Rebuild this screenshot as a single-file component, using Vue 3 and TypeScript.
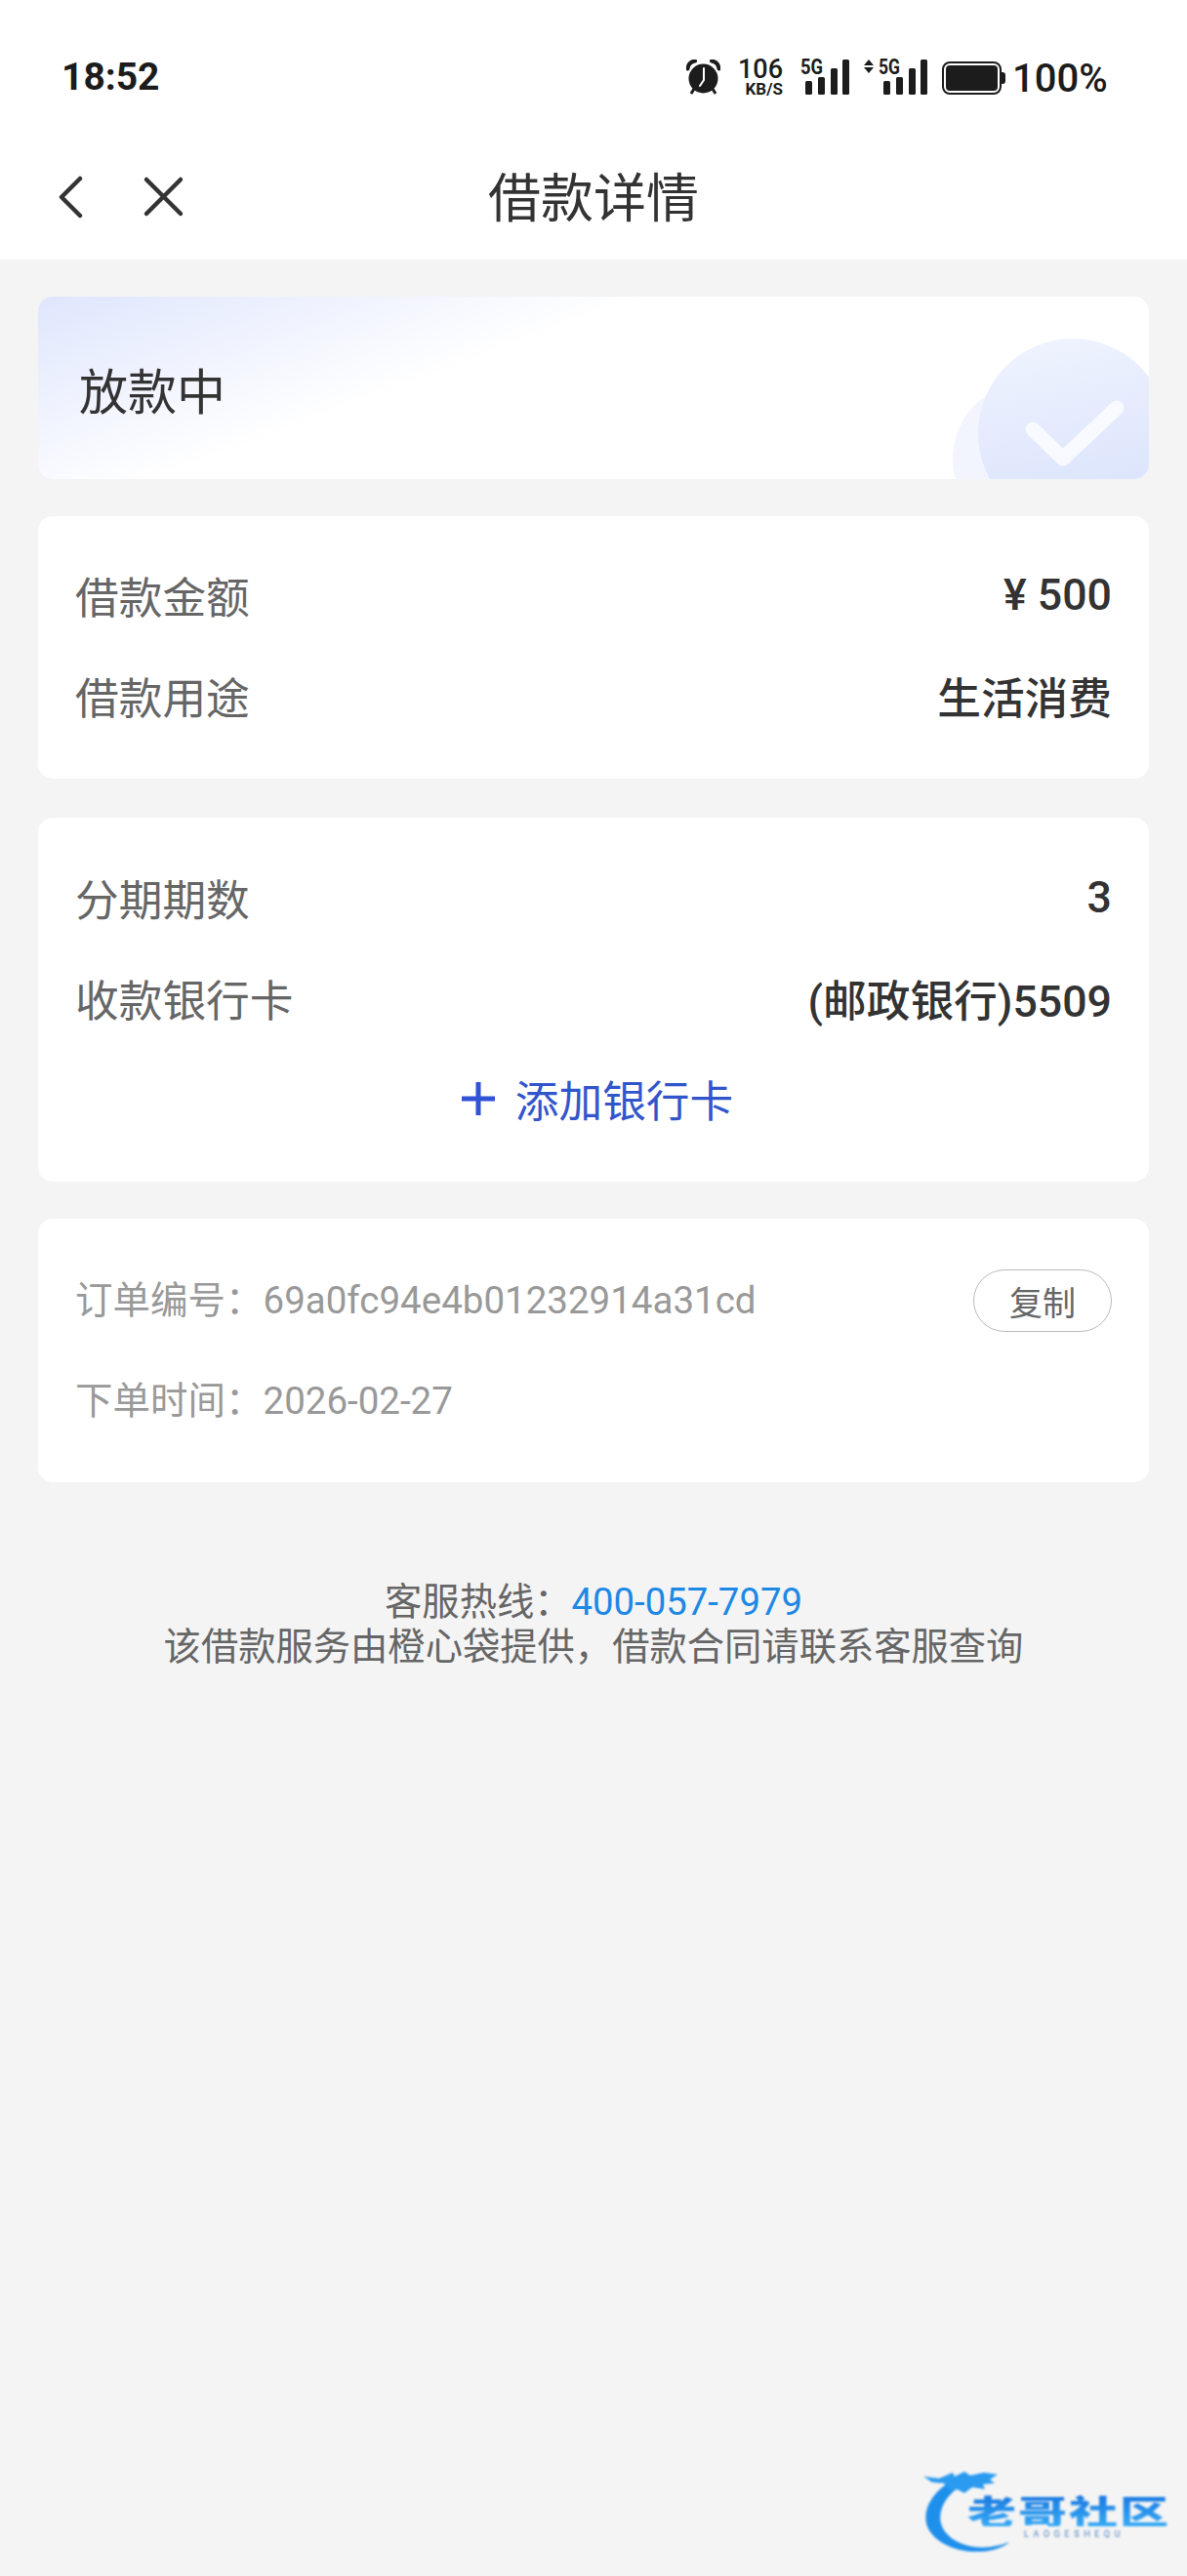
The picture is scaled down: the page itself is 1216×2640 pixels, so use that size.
<script setup lang="ts">
interface Row {
  label: string
  value: string
}

const loanRows: Row[] = [
  { label: '借款金额', value: '¥ 500' },
  { label: '借款用途', value: '生活消费' }
]

const planRows: Row[] = [
  { label: '分期期数', value: '3' },
  { label: '收款银行卡', value: '(邮政银行)5509' }
]

// 信号格：x / y 相对各自的 svg
const bars = [
  { x: 5, y: 22, h: 14 },
  { x: 18, y: 18, h: 18 },
  { x: 31, y: 9, h: 27 },
  { x: 43, y: 0, h: 36 }
]
</script>

<template>
  <div class="page">
    <div class="status-bar">
      <span class="time">18:52</span>
      <div class="status-right">
        <svg class="alarm" width="35" height="36" viewBox="0 0 35 36">
          <path d="M1.5 9.5C2 5 5 2 9 1.5" class="ear" />
          <path d="M33.5 9.5C33 5 30 2 26 1.5" class="ear" />
          <path d="M8 30l-3 5M27 30l3 5" class="foot" />
          <circle cx="17.5" cy="19.5" r="15" fill="#1c1c1c" />
          <path d="M18 9v12l-4 6" class="hand" />
        </svg>
        <div class="speed">
          <span class="speed-num">106</span>
          <span class="speed-unit">KB/S</span>
        </div>
        <svg class="sig" width="50" height="36" viewBox="0 0 50 36">
          <text x="0" y="15" class="net" textLength="23" lengthAdjust="spacingAndGlyphs">5G</text>
          <rect v-for="b in bars" :key="b.x" :x="b.x" :y="b.y" width="7" :height="b.h" rx="1.5" fill="#1c1c1c" />
        </svg>
        <svg class="sig" width="65" height="36" viewBox="0 0 65 36">
          <path d="M5 0l5 6H0zM5 14l5-6H0z" fill="#1c1c1c" />
          <text x="15" y="15" class="net" textLength="22" lengthAdjust="spacingAndGlyphs">5G</text>
          <rect v-for="b in bars" :key="b.x" :x="b.x + 15" :y="b.y" width="7" :height="b.h" rx="1.5" fill="#1c1c1c" />
        </svg>
        <svg class="sig" width="65" height="36" viewBox="0 0 65 36">
          <rect x="1" y="3" width="59" height="32" rx="7" fill="none" stroke="#1c1c1c" stroke-width="2" />
          <rect x="4" y="6" width="53" height="26" rx="4" fill="#1c1c1c" />
          <path d="M61 13h1a3 3 0 0 1 3 3v6a3 3 0 0 1-3 3h-1z" fill="#1c1c1c" />
        </svg>
        <span class="battery-text">100%</span>
      </div>
    </div>

    <div class="nav">
      <svg class="nav-icons" width="130" height="44" viewBox="0 0 130 44">
        <path d="M22 3L3 22l19 19" />
        <path d="M90 4l35 35M125 4L90 39" />
      </svg>
      <h1 class="title">借款详情</h1>
    </div>

    <div class="content">
      <section class="card status-card">
        <svg class="status-deco" width="201" height="187" viewBox="0 0 201 187">
          <defs>
            <linearGradient id="bigCircle" x1="0" y1="0" x2="0.2" y2="1">
              <stop offset="0" stop-color="#f0f4fe" />
              <stop offset="1" stop-color="#dae3fc" />
            </linearGradient>
          </defs>
          <circle cx="78" cy="166" r="78" fill="#f2f5fe" />
          <circle cx="123" cy="140" r="97" fill="url(#bigCircle)" />
          <path d="M82 136l31 30 55-52" class="check" />
        </svg>
        <span class="status-text">放款中</span>
      </section>

      <section class="card list-card loan-card">
        <div v-for="row in loanRows" :key="row.label" class="row">
          <span class="label">{{ row.label }}</span>
          <span class="value">{{ row.value }}</span>
        </div>
      </section>

      <section class="card list-card">
        <div v-for="row in planRows" :key="row.label" class="row">
          <span class="label">{{ row.label }}</span>
          <span class="value">{{ row.value }}</span>
        </div>
        <div class="row add-row">
          <svg width="34" height="34" viewBox="0 0 34 34">
            <path d="M0 17h34M17 0v34" stroke="#2f52d6" stroke-width="5" fill="none" />
          </svg>
          <span class="add-text">添加银行卡</span>
        </div>
      </section>

      <section class="card list-card">
        <div class="row">
          <span class="meta">订单编号：<span class="meta-value">69a0fc94e4b01232914a31cd</span></span>
          <button class="copy" type="button">复制</button>
        </div>
        <div class="row">
          <span class="meta">下单时间：<span class="meta-value">2026-02-27</span></span>
        </div>
      </section>

      <footer class="footer">
        <p>客服热线：<span class="phone">400-057-7979</span></p>
        <p>该借款服务由橙心袋提供，借款合同请联系客服查询</p>
      </footer>
    </div>

    <div class="watermark">
      <svg class="wm-dragon" width="110" height="90" viewBox="0 0 110 90">
        <path d="M30 14C8 26 0 44 3 58c4 18 30 30 52 29 12 0 26-3 33-10-14 6-30 7-42 4C26 76 14 62 18 46c2-10 10-20 20-26z" fill="#1f8fec" />
        <path d="M0 10l16 2 14-6 2 4 10-5 6 4 14-3 14 2-8 5 5 4-12 1 2 5-13-2-8 6-8-4-6 2-7-8-12-1z" fill="#2a9bf0" />
      </svg>
      <span class="wm-title">老哥社区</span>
      <span class="wm-sub">LAOGESHEQU</span>
    </div>
  </div>
</template>

<style>
html,
body {
  margin: 0;
  background: #f4f4f4;
}
</style>

<style scoped>
.page {
  position: relative;
  width: 1216px;
  height: 2640px;
  overflow: hidden;
  background: #f4f4f4;
  font-family: Roboto, "Noto Sans CJK SC", sans-serif;
}

.status-bar {
  display: flex;
  justify-content: space-between;
  box-sizing: border-box;
  height: 138px;
  padding: 61px 82px 0 63px;
  background: #fff;
  color: #1c1c1c;
}

.time {
  font-size: 39px;
  font-weight: 700;
  line-height: 36px;
}

.status-right {
  display: flex;
  align-items: flex-start;
  height: 36px;
}

.sig {
  overflow: visible;
}

.alarm {
  margin-right: 18px;
}

.ear {
  fill: none;
  stroke: #1c1c1c;
  stroke-width: 4;
  stroke-linecap: round;
}

.foot {
  fill: none;
  stroke: #1c1c1c;
  stroke-width: 3;
}

.hand {
  fill: none;
  stroke: #fff;
  stroke-width: 2;
  stroke-linecap: round;
  stroke-linejoin: round;
}

.speed {
  display: flex;
  flex-direction: column;
  align-items: flex-end;
  width: 46px;
  margin-right: 18px;
  font-weight: 500;
}

.speed-num {
  font-size: 27px;
  line-height: 21px;
}

.speed-unit {
  margin-top: 2px;
  font-size: 17px;
  font-weight: 700;
  line-height: 14px;
}

.status-right svg + svg {
  margin-left: 15px;
}

.net {
  fill: #1c1c1c;
  font-size: 22px;
  font-weight: 700;
}

.battery-text {
  width: 97px;
  margin-left: 7px;
  font-size: 40px;
  font-weight: 500;
  line-height: 40px;
  white-space: nowrap;
}

.nav {
  position: relative;
  display: flex;
  align-items: center;
  justify-content: center;
  height: 128px;
  background: #fff;
}

.nav-icons {
  position: absolute;
  left: 60px;
  top: 42px;
  fill: none;
  stroke: #333;
  stroke-width: 4.5;
  stroke-linecap: round;
  stroke-linejoin: round;
}

.title {
  margin: 6px 0 0;
  color: #333;
  font-size: 54px;
  font-weight: 400;
  line-height: 70px;
}

.content {
  display: flex;
  flex-direction: column;
  gap: 38px;
  padding: 38px 39px 0;
}

.card {
  border-radius: 15px;
  background: #fff;
}

.status-card {
  position: relative;
  display: flex;
  align-items: center;
  box-sizing: border-box;
  height: 187px;
  padding: 10px 0 0 42px;
  overflow: hidden;
  background: linear-gradient(159.5deg, #dfe6fd 0%, #fff 38%);
}

.status-deco {
  position: absolute;
  right: 0;
  top: 0;
}

.check {
  fill: none;
  stroke: #fff;
  stroke-opacity: 0.75;
  stroke-width: 15;
  stroke-linecap: round;
  stroke-linejoin: round;
}

.status-text {
  position: relative;
  color: #333;
  font-size: 50px;
  line-height: 60px;
}

.list-card {
  padding: 30px 38px 34px;
}

.loan-card {
  margin-bottom: 2px;
  padding-top: 29px;
  padding-bottom: 34px;
}

.row {
  display: flex;
  align-items: center;
  justify-content: space-between;
  height: 103px;
}

.label {
  color: #666;
  font-size: 44.7px;
}

.value {
  color: #333;
  font-size: 44.7px;
  font-weight: 500;
}

.add-row {
  justify-content: center;
  gap: 21px;
  padding-left: 8px;
}

.add-text {
  color: #3355cc;
  font-size: 44.7px;
}

.meta {
  margin-bottom: 3px;
  color: #999;
  font-size: 38.5px;
}

.copy {
  box-sizing: border-box;
  width: 142px;
  height: 64px;
  margin-top: 5px;
  padding: 0;
  border: 1.5px solid #bbb;
  border-radius: 32px;
  background: #fff;
  color: #666;
  font-family: inherit;
  font-size: 34px;
}

.footer {
  margin-top: 62px;
  color: #666;
  font-size: 38.3px;
  line-height: 46px;
  text-align: center;
}

.footer p {
  margin: 0;
}

.phone {
  color: #1e88e5;
}

.watermark {
  position: absolute;
  left: 946px;
  top: 2528px;
  width: 260px;
  height: 90px;
  filter: blur(1px);
}

.wm-dragon {
  position: absolute;
  left: 0;
  top: 0;
}

.wm-title {
  position: absolute;
  left: 45px;
  top: 19px;
  background: linear-gradient(180deg, #1875e0, #35aaf5);
  -webkit-background-clip: text;
  background-clip: text;
  color: transparent;
  font-family: "Noto Sans CJK SC", sans-serif;
  font-size: 50px;
  font-weight: 900;
  line-height: 50px;
  letter-spacing: 2px;
  white-space: nowrap;
  transform: scaleY(0.68);
  transform-origin: 0 50%;
}

.wm-sub {
  position: absolute;
  left: 103px;
  top: 64px;
  color: #4a7fc0;
  font-size: 9px;
  line-height: 10px;
  letter-spacing: 4.6px;
  white-space: nowrap;
}
</style>
